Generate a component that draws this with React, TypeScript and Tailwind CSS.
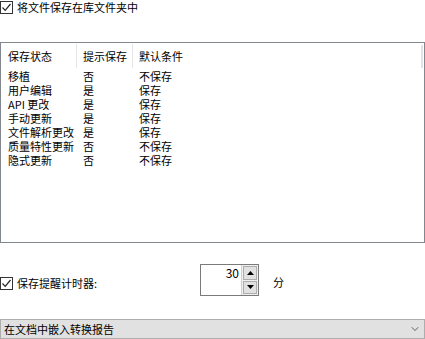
import { ChevronDown } from 'lucide-react';

const rows = [
  ['移植', '否', '不保存'],
  ['用户编辑', '是', '保存'],
  ['API 更改', '是', '保存'],
  ['手动更新', '是', '保存'],
  ['文件解析更改', '是', '保存'],
  ['质量特性更新', '否', '不保存'],
  ['隐式更新', '否', '不保存'],
];

const CheckBox = () => (
  <div className="flex h-[13px] w-[13px] shrink-0 items-center justify-center border border-[#333] bg-white">
    <svg width="11" height="11" viewBox="0 0 11 11">
      <path d="M1.5 5.5 L4.2 8.3 L9.5 2" fill="none" stroke="#222" strokeWidth="1.2" />
    </svg>
  </div>
);

const App = () => {
  return (
    <div
      className="flex h-[339px] w-[425px] flex-col overflow-hidden bg-white text-[11px] leading-[13px] text-black"
      style={{ fontFamily: '"Noto Sans CJK SC", "Liberation Sans", sans-serif' }}
    >
      <div className="mt-[1px] flex h-[13px] items-center gap-[4px]">
        <CheckBox />
        <span>将文件保存在库文件夹中</span>
      </div>

      <div className="relative mt-[28px] h-[201px] w-[425px] border border-[#828790] bg-white">
        <div className="absolute right-[1px] top-[2px] h-[23px] w-[2px] bg-[#e3e3e3]" />
        <div className="mt-[1px] grid h-[24px] grid-cols-[76px_56px_1fr] items-center">
          <div className="flex h-full items-center border-r border-[#e5e5e5] pl-[7px]">保存状态</div>
          <div className="flex h-full items-center border-r border-[#e5e5e5] pl-[6px]">提示保存</div>
          <div className="pl-[6px]">默认条件</div>
        </div>
        <div className="mt-[1px] flex flex-col">
          {rows.map((r) => (
            <div key={r[0]} className="grid h-[14px] grid-cols-[76px_56px_1fr] items-center">
              <div className="pl-[7px]">{r[0]}</div>
              <div className="pl-[6px]">{r[1]}</div>
              <div className="pl-[6px]">{r[2]}</div>
            </div>
          ))}
        </div>
      </div>

      <div className="mt-[21px] flex h-[32px]">
        <div className="mt-[13px] flex h-[13px] w-[200px] items-center gap-[4px]">
          <CheckBox />
          <span>保存提醒计时器:</span>
        </div>
        <div className="flex h-[32px] border border-[#7a7a7a] bg-white">
          <div className="w-[40px] pr-[2px] pt-[1px] text-right text-[12px]">30</div>
          <div className="flex w-[17px] flex-col gap-[1px] border-l border-[#d0d0d0] bg-[#f0f0f0] p-[1px]">
            <div className="flex flex-1 items-center justify-center border border-[#adadad] bg-[#e1e1e1]">
              <svg width="7" height="4" viewBox="0 0 7 4">
                <path d="M0 4 L3.5 0 L7 4 Z" fill="#000" />
              </svg>
            </div>
            <div className="flex flex-1 items-center justify-center border border-[#adadad] bg-[#e1e1e1]">
              <svg width="7" height="4" viewBox="0 0 7 4">
                <path d="M0 0 L3.5 4 L7 0 Z" fill="#000" />
              </svg>
            </div>
          </div>
        </div>
        <div className="ml-[14px] mt-[12px]">分</div>
      </div>

      <div className="mt-[23px] flex h-[20px] items-center justify-between border border-[#adadad] bg-[#e1e1e1] pl-[3px] pr-[3px]">
        <span>在文档中嵌入转换报告</span>
        <ChevronDown size={12} strokeWidth={1.5} color="#333" />
      </div>
    </div>
  );
};

export default App;
